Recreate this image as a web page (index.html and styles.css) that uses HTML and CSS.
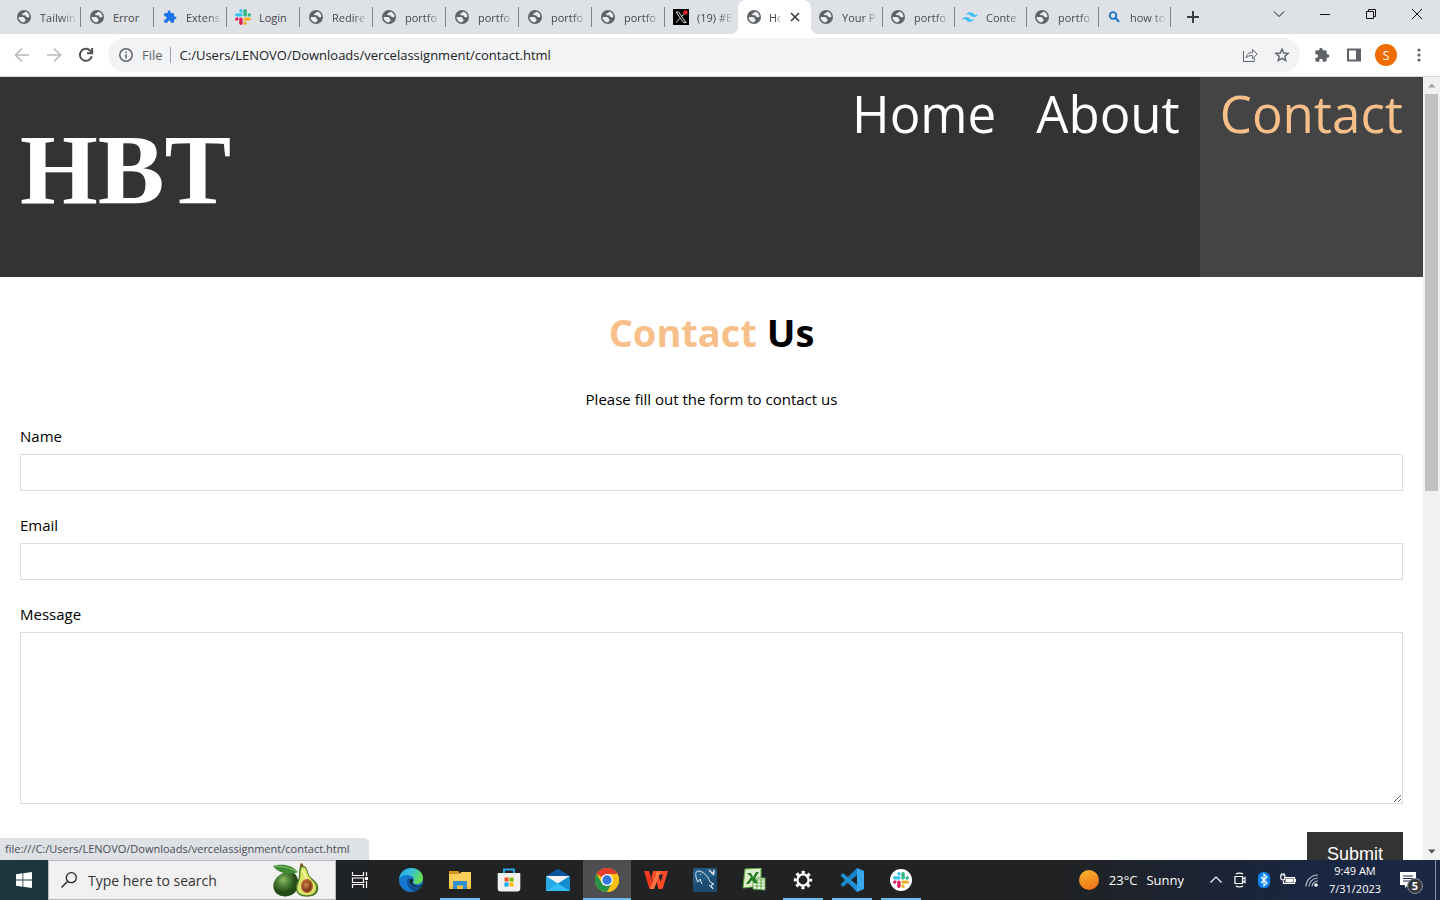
FILE: index.html
```html
<!DOCTYPE html>
<html lang="en">
<head>
<meta charset="utf-8">
<title>Contact</title>
<link rel="stylesheet" href="styles.css">
</head>
<body>
<svg class="defs" aria-hidden="true">
  <symbol id="globe" viewBox="0 0 14 14"><circle cx="7" cy="7" r="7" fill="#5f6368"/><path d="M1.600 7h4.100c1.300 0 2 .8 2 1.700 0 .9 1.200.7 1.200 1.400S7.400 11.100 7.100 12.400C4 12.400 1.600 10 1.600 7zM8.200 1.700c-1.100.5-.9 1.300-2.100 1.600-1.200.2-1.200 1.700-.1 1.900h2c.9 0 .8 1.400 1.600 1.700 1 .3 1.800.8 2.800.1.200-3-1.700-5-4.200-5.300z" fill="#eceef1"/></symbol>
  <symbol id="puzzle" viewBox="0 0 24 24"><path d="M20.500 11H19V7a2 2 0 0 0-2-2h-4V3.500a2.500 2.500 0 0 0-5 0V5H4a2 2 0 0 0-2 2v3.800h1.500a2.700 2.700 0 0 1 0 5.400H2V20a2 2 0 0 0 2 2h3.800v-1.500a2.700 2.700 0 0 1 5.400 0V22H17a2 2 0 0 0 2-2v-4h1.500a2.500 2.500 0 0 0 0-5z" fill="currentColor"/></symbol>
  <symbol id="slack" viewBox="0 0 122 122"><g><path fill="#e01e5a" d="M26 77a13 13 0 1 1-13-13h13zm6 0a13 13 0 0 1 26 0v32a13 13 0 0 1-26 0z"/><path fill="#36c5f0" d="M45 26a13 13 0 1 1 13-13v13zm0 6a13 13 0 0 1 0 26H13a13 13 0 0 1 0-26z"/><path fill="#2eb67d" d="M96 45a13 13 0 1 1 13 13H96zm-6 0a13 13 0 0 1-26 0V13a13 13 0 0 1 26 0z"/><path fill="#ecb22e" d="M77 96a13 13 0 1 1-13 13V96zm0-6a13 13 0 0 1 0-26h32a13 13 0 0 1 0 26z"/></g></symbol>
</svg>

<div class="tabstrip">
  <div class="tabs">
    <button class="tab"><svg class="fav"><use href="#globe"/></svg><span>Tailwin</span></button>
    <button class="tab"><svg class="fav"><use href="#globe"/></svg><span class="whole">Error</span></button>
    <button class="tab"><svg class="fav blue"><use href="#puzzle"/></svg><span>Extens</span></button>
    <button class="tab"><svg class="fav wide"><use href="#slack"/></svg><span class="whole">Login</span></button>
    <button class="tab"><svg class="fav"><use href="#globe"/></svg><span>Redire</span></button>
    <button class="tab"><svg class="fav"><use href="#globe"/></svg><span>portfo</span></button>
    <button class="tab"><svg class="fav"><use href="#globe"/></svg><span>portfo</span></button>
    <button class="tab"><svg class="fav"><use href="#globe"/></svg><span>portfo</span></button>
    <button class="tab"><svg class="fav"><use href="#globe"/></svg><span>portfo</span></button>
    <button class="tab last"><svg class="fav wide" viewBox="0 0 16 16"><path d="M0 0h16v16H0z"/><path d="M3 3h2.500l7.500 10.500h-2.500zM12.500 3 8.700 7.400M7 9.200 3.200 13.500" fill="none" stroke="#ddd" stroke-width="1"/><circle cx="12.500" cy="3.500" r="2.200" fill="#f4212e"/></svg><span>(19) #E</span></button>
    <button class="tab active"><svg class="fav"><use href="#globe"/></svg><span>Ho</span><svg class="close" viewBox="0 0 10 10"><path d="M1 1l8 8M9 1 1 9" stroke="#3c4043" stroke-width="1.700"/></svg></button>
    <button class="tab narrow"><svg class="fav"><use href="#globe"/></svg><span>Your P</span></button>
    <button class="tab narrow"><svg class="fav"><use href="#globe"/></svg><span>portfo</span></button>
    <button class="tab narrow"><svg class="fav wide" viewBox="0 0 24 24"><path fill="#38bdf8" d="M12 4.800c-3.200 0-5.200 1.600-6 4.800 1.200-1.600 2.600-2.200 4.200-1.800.9.200 1.600.9 2.300 1.700 1.200 1.200 2.600 2.500 5.500 2.500 3.200 0 5.200-1.600 6-4.800-1.200 1.600-2.600 2.200-4.200 1.800-.9-.2-1.600-.9-2.300-1.700-1.200-1.200-2.600-2.500-5.500-2.500zM6 12c-3.200 0-5.200 1.600-6 4.800 1.200-1.600 2.600-2.200 4.200-1.800.9.200 1.600.9 2.300 1.700C7.700 17.900 9.100 19.200 12 19.200c3.200 0 5.200-1.600 6-4.800-1.200 1.600-2.600 2.200-4.200 1.800-.9-.2-1.600-.9-2.300-1.700C10.300 13.300 8.900 12 6 12z"/></svg><span>Conte</span></button>
    <button class="tab narrow"><svg class="fav"><use href="#globe"/></svg><span>portfo</span></button>
    <button class="tab narrow"><svg class="fav" viewBox="0 0 14 14"><circle cx="6" cy="5.500" r="3.300" fill="none" stroke="#1a73c8" stroke-width="1.800"/><path d="m8.500 8 3.500 3.700" stroke="#1a73c8" stroke-width="2"/></svg><span>how to</span></button>
  </div>
  <button class="newtab" aria-label="New tab"><svg viewBox="0 0 12 12"><path d="M6 0v12M0 6h12" stroke="#3c4043" stroke-width="2"/></svg></button>
  <div class="winbtns">
    <button aria-label="Search tabs"><svg viewBox="0 0 12 12"><path d="m1 3.500 5 5 5-5"/></svg></button>
    <button aria-label="Minimize"><svg viewBox="0 0 12 12"><path d="M1 6.500h10"/></svg></button>
    <button aria-label="Restore"><svg viewBox="0 0 12 12"><path d="M1.500 3.500h7v7h-7zM3.500 3.500v-2h7v7h-2"/></svg></button>
    <button aria-label="Close"><svg viewBox="0 0 12 12"><path d="m1 1 10 10M11 1 1 11"/></svg></button>
  </div>
</div>

<div class="toolbar">
  <button class="navbtn dim" aria-label="Back"><svg viewBox="0 0 16 16"><path d="M15 8H2M8 1.500 1.500 8 8 14.500"/></svg></button>
  <button class="navbtn dim" aria-label="Forward"><svg viewBox="0 0 16 16"><path d="M1 8h13M8 1.500 14.500 8 8 14.500"/></svg></button>
  <button class="navbtn" aria-label="Reload"><svg viewBox="0 0 16 16"><path d="M13.800 9.200A6 6 0 1 1 12.300 3.700L14 5.500M14.200 1v5.300H9"/></svg></button>
  <div class="omnibox">
    <svg class="info" viewBox="0 0 14 14"><circle cx="7" cy="7" r="6.200" fill="none" stroke="#5f6368" stroke-width="1.500"/><path d="M7 6.200V10.500M7 3.400V5" stroke="#5f6368" stroke-width="1.600"/></svg>
    <span class="scheme">File</span>
    <input class="url" aria-label="Address" value="C:/Users/LENOVO/Downloads/vercelassignment/contact.html">
    <button aria-label="Share"><svg viewBox="0 0 16 16"><path d="M1.500 4v10.500h10.800V11M4 11c.5-4 3-5.500 6.500-5.500V2.500l4.700 4.500-4.700 4.500V8.500C7.500 8.500 5.500 9 4 11z"/></svg></button>
    <button aria-label="Bookmark"><svg viewBox="0 0 16 16"><path d="m8 2 1.700 4 4.500.4-3.400 2.900 1 4.300L8 11.300l-3.800 2.300 1-4.300-3.400-2.900 4.500-.4z" stroke-width="1.400"/></svg></button>
  </div>
  <div class="actions">
    <button aria-label="Extensions"><svg viewBox="0 0 16 16"><use href="#puzzle"/></svg></button>
    <button aria-label="Side panel"><svg viewBox="0 0 16 16"><path d="M1 1.500h14v13H1z" fill="#5f6368"/><path d="M3 3.500h7v9H3z" fill="#fff"/></svg></button>
    <button class="avatar">S</button>
    <button aria-label="Menu"><svg viewBox="0 0 16 16"><g fill="#5f6368"><circle cx="8" cy="3" r="1.600"/><circle cx="8" cy="8" r="1.600"/><circle cx="8" cy="13" r="1.600"/></g></svg></button>
  </div>
</div>

<div class="viewport">
  <div class="page">
    <header class="site-header">
      <h1>HBT</h1>
      <nav><a href="#">Home</a><a href="#">About</a><a href="#" class="current">Contact</a></nav>
    </header>
    <main>
      <h2><span>Contact</span> Us</h2>
      <p>Please fill out the form to contact us</p>
      <form>
        <label for="name">Name</label>
        <input id="name" type="text">
        <label for="email">Email</label>
        <input id="email" type="email">
        <label for="message">Message</label>
        <textarea id="message"></textarea>
        <button type="button" class="submit">Submit</button>
      </form>
    </main>
  </div>
  <div class="scrollbar">
    <svg viewBox="0 0 17 17"><path d="M5 10.500h7.500L8.700 6.500z" fill="#a3a3a3"/></svg>
    <div class="track"><div class="thumb"></div></div>
    <svg viewBox="0 0 17 17"><path d="M5 6.500h7.500l-3.800 4z" fill="#505050"/></svg>
  </div>
  <div class="status">file:///C:/Users/LENOVO/Downloads/vercelassignment/contact.html</div>
</div>

<div class="taskbar">
  <button class="start" aria-label="Start"><svg viewBox="0 0 16 16"><path fill="#fff" d="M0 2.300 6.500 1.300v6.300H0zM7.300 1.200 16 0v7.600H7.300zM0 8.400h6.500v6.300L0 13.700zM7.300 8.400H16V16l-8.700-1.200z"/></svg></button>
  <div class="search">
    <svg class="mag" viewBox="0 0 16 16"><circle cx="10.300" cy="5.700" r="5" fill="none" stroke="#222" stroke-width="1.300"/><path d="M6.700 9.300.5 15.500" stroke="#222" stroke-width="1.300"/></svg>
    <input aria-label="Search" placeholder="Type here to search">
    <svg class="avocado" viewBox="0 0 46 34">
      <defs>
        <radialGradient id="av" cx=".4" cy=".35"><stop offset="0" stop-color="#8eb864"/><stop offset=".5" stop-color="#4b8035"/><stop offset="1" stop-color="#234a17"/></radialGradient>
        <radialGradient id="pit" cx=".4" cy=".35"><stop offset="0" stop-color="#d78a55"/><stop offset="1" stop-color="#7d3b16"/></radialGradient>
      </defs>
      <path d="M12 9c5-2 10 0 12 5 2 5 2 9-1 14-3 5-11 7-17 4-6-3-7-10-4-15 2-4 6-6 10-8z" fill="url(#av)"/>
      <path d="M27 2l1-2 2 1v4h-3z" fill="#925018"/>
      <path d="M28 3c4-1 6 2 7 6 1 5 3 5 7 9 6 6 3 14-3 15-7 2-16 0-16-7-1-6 3-8 3-14 0-4 0-8 2-9z" fill="#4e7923"/>
      <path d="M29 4.500c3-1 4.500 2 5.300 5.500 1 4 3 5 6 8.500 5 5 3 12-3 13.300-6 1.200-13-.3-13-6.300 0-5 3-8 3-13 0-4 .2-7 1.700-8z" fill="#dce36b"/>
      <path d="M29 8c2 0 3 3 3.500 6l5 7" fill="none" stroke="#f1f2a0" stroke-width="2"/>
      <ellipse cx="34" cy="23" rx="6" ry="7" fill="#b45f2a"/><ellipse cx="34" cy="23.500" rx="4.600" ry="5.300" fill="url(#pit)"/>
      <path d="M0 3c8-3 20-1 25 6-9 4-20 1-25-6z" fill="#3f8a38"/><path d="M0 3c9 0 17 2 25 6" fill="none" stroke="#91c46c"/>
    </svg>
  </div>
  <div class="apps">
    <button class="taskview" aria-label="Task view"><svg viewBox="0 0 24 24"><path d="M4.500 4v3.500h11V4M4.500 20v-3.500h11V20M4.500 10h11v4.500h-11zM18.500 4v4M18.500 13v7" fill="none" stroke="#fff" stroke-width="1.200"/><path d="M17 9h3v3h-3z" fill="#fff"/></svg></button>
    <button aria-label="Edge"><svg viewBox="0 0 24 24"><defs><linearGradient id="e1" x2="1" y2=".4"><stop stop-color="#22a5e0"/><stop offset=".5" stop-color="#35c1df"/><stop offset="1" stop-color="#65dd55"/></linearGradient></defs><circle cx="12" cy="12" r="12" fill="#1778cf"/><path d="M.2 11C1 4.500 6 0 12 0c7 0 12 4.500 12 10 0 4-3 6-6.500 6-3 0-4-1.200-3-2.500 1.200-2 .2-5-3.500-6C6.500 6.300 2 7.500.2 11z" fill="url(#e1)"/><path d="M11 11.500c1-1.500 3-.9 3 1-1.500 2-.2 4.500 3 5 2.200.4 4 .1 6-1L22.500 18c-6 2-12.500 0-11.500-6.500z" fill="#1f2224"/><path d="M9.500 9.500C6.500 13 8 22 16 23.300 19 22.300 21.500 20 22.500 18c-6.700 2.500-12.500-1-11.500-6.500z" fill="#124f93"/></svg></button>
    <button class="open" aria-label="File Explorer"><svg viewBox="0 0 24 24"><path d="M1 3h9l2 2.500H1z" fill="#e09b10"/><path d="M1 5.500h11l1.500-1.500H23v17H1z" fill="#fccf5b"/><path d="M1 18h22v3H1z" fill="#f8bd3b"/><path d="M5 13h14v8h-4v-3.500H9V21H5z" fill="#328fd2"/></svg></button>
    <button aria-label="Store"><svg viewBox="0 0 24 24"><path d="M7 5V1.500h10V5" fill="none" stroke="#27a6e8" stroke-width="2"/><path d="M.7 5h22.600v15.500a3 3 0 0 1-3 3H3.700a3 3 0 0 1-3-3z" fill="#f2f2f2"/><path d="M7.500 9.500h4v4h-4z" fill="#f25022"/><path d="M12.500 9.500h4v4h-4z" fill="#7fba00"/><path d="M7.500 14.500h4v4h-4z" fill="#00a4ef"/><path d="M12.500 14.500h4v4h-4z" fill="#ffb900"/></svg></button>
    <button aria-label="Mail"><svg viewBox="0 0 24 24"><path d="M0 8 12 .8 24 8v3H0z" fill="#0b539c"/><path d="M1 8h22v8H1z" fill="#f4f4f4"/><path d="M0 8l12 7.500L24 8v15H0z" fill="#27a9e8"/><path d="M24 8v15L12 15.500z" fill="#168bd0"/><path d="m0 23 12-7.500L24 23z" fill="#35bdf5"/></svg></button>
    <button class="open focused" aria-label="Chrome"><svg viewBox="0 0 24 24"><circle cx="12" cy="12" r="12" fill="#fbc116"/><path d="M12 12 1.600 6A12 12 0 0 1 22.400 6H12z" fill="#e33b2e"/><path d="M1.600 6A12 12 0 0 0 12 24l5.200-9L12 18 6.800 15z" fill="#269447"/><path d="M12 6h10.400A12 12 0 0 1 12 24l5.200-9z" fill="#fbc116"/><circle cx="12" cy="12" r="6" fill="#fff"/><circle cx="12" cy="12" r="4.700" fill="#3478df"/></svg></button>
    <button aria-label="WPS"><svg viewBox="0 0 24 24"><path d="M0 3h5l3.500 11L11 7l2 6-4 8H5.500z" fill="#f13a20"/><path d="M9 3h15l-5.500 18h-4L11.500 10l3-3 2 7L19 6.500h-7.500L9 14 7.500 9z" fill="#ff4927"/><path d="M13 3h4l-7 18H6z" fill="#ff7643"/></svg></button>
    <button aria-label="MySQL Workbench"><svg viewBox="0 0 24 24"><rect width="24" height="24" rx="2" fill="#225b83"/><path d="M0 17 24 8v14l-2 2H2l-2-2z" fill="#1b4b71"/><path d="M5 14C2 9 2 3 5 3c5 0 10 5 12 11l4 2-3 1 2 4-4-4M5 14l2-3 2 5M7 6l1 1" fill="none" stroke="#dde8ef" stroke-width="1"/><path d="m16 2 5 5M21 2v3h-3" fill="none" stroke="#ddd" stroke-width="1.500"/></svg></button>
    <button aria-label="Excel"><svg viewBox="0 0 24 24"><path d="M3 1 19 0v18L1 20z" fill="#dceecb" stroke="#5da53c"/><path d="M11 10h12v12l-12-1z" fill="#f4faef" stroke="#62a34c"/><path d="M12 12h10M12 15h10M12 18h10M15 11v10M19 11v10" stroke="#70b14e" stroke-width="1.200"/><path d="m5 5 4 0 2 4 3-5h3l-4 6 3 5h-4l-2-3-3 4H4l5-7z" fill="#257b23"/></svg></button>
    <button class="open" aria-label="Settings"><svg viewBox="0 0 24 24"><circle cx="12" cy="12" r="5.600" fill="none" stroke="#fff" stroke-width="2.400"/><circle cx="12" cy="12" r="7.700" fill="none" stroke="#fff" stroke-width="3" stroke-dasharray="3 3.048" stroke-dashoffset="1.500"/></svg></button>
    <button class="open" aria-label="VS Code"><svg viewBox="0 0 24 24"><path d="m17 0 7 3v18l-7 3z" fill="#35a8ed"/><path d="M17 0v7L3 19l-2.500-2.500z" fill="#1685cb"/><path d="m3 5-2.500 2.500L17 24v-7z" fill="#218fd5"/></svg></button>
    <button class="open" aria-label="Slack"><svg viewBox="0 0 24 24"><circle cx="12" cy="12" r="11" fill="#fff"/><use href="#slack" x="4" y="4" width="16" height="16"/></svg></button>
  </div>
  <div class="tray">
    <button class="weather"><i class="sun"></i><span>23°C</span><span>Sunny</span></button>
    <button class="ti" aria-label="Hidden icons"><svg viewBox="0 0 16 16"><path d="m2.500 10.500 5.500-5.500 5.500 5.500"/></svg></button>
    <button class="ti" aria-label="Meet now"><svg viewBox="0 0 16 16"><path d="M3 4.500h7.500v7H3zM10.500 7 13 5.500v5L10.500 9M4 2c1.500-1.300 5.500-1.300 7 0M4 14c1.500 1.300 5.500 1.300 7 0"/></svg></button>
    <button class="ti" aria-label="Bluetooth"><svg viewBox="0 0 16 16"><rect x="2" width="12" height="16" rx="5.500" fill="#0a84f4" stroke="none"/><path d="m5 5 6 6-3 2.700V2.300L11 5l-6 6"/></svg></button>
    <button class="ti" aria-label="Battery"><svg viewBox="0 0 16 16"><path d="M5 5.500h9.500v6H3.500V9M.8 3h4v3a2 2 0 0 1-4 0zM1.800 1v2M4 1v2"/><path d="M6 7h7v3H6z" fill="#fff"/><path d="M15.500 7v3"/></svg></button>
    <button class="ti" aria-label="Network"><svg viewBox="0 0 16 16"><g stroke="#bbc2ce"><path d="M2 14.500C2 8 7.500 3 14 3M5 14.500C5 10 9 6 14 6M8 14.500c0-3 3-5.500 6-5.500"/></g><circle cx="12" cy="13" r="1.800" fill="#fff" stroke="none"/></svg></button>
    <div class="clock"><span>9:49 AM</span><span>7/31/2023</span></div>
    <button class="notice" aria-label="Notifications"><svg viewBox="0 0 16 16"><path d="M0 0h16v13H8l-3 3v-3H0z" fill="#fff"/><path d="M3 4h10M3 6.500h10M3 9h7" stroke="#1a2742"/></svg><b>5</b></button>
  </div>
</div>
</body>
</html>
```
FILE: styles.css
```css
* { box-sizing: border-box; }
html, body { height: 100%; }
body {
  margin: 0;
  display: flex;
  flex-direction: column;
  overflow: hidden;
  background: #fff;
  color: #000;
  font-family: "Open Sans", sans-serif;
}
button { border: 0; padding: 0; background: none; font: inherit; color: inherit; }
svg { display: block; flex: none; }
.defs { position: absolute; width: 0; height: 0; }

/* Tab strip */
.tabstrip { display: flex; flex: none; height: 34px; background: #dee1e6; color: #45494d; font-size: 11px; }
.tabs { display: flex; flex: 0 1 1171px; min-width: 0; padding-left: 8px; }
.tab { position: relative; display: flex; flex: 0 1 73px; align-items: center; gap: 9px; min-width: 0; padding: 0 2px 0 9px; text-align: left; }
.tab.narrow { flex-basis: 72px; padding-left: 8px; }
.tab::after { content: ""; position: absolute; right: 0; top: 7px; width: 1px; height: 20px; background: #808489; }
.tab span { flex: 1; min-width: 0; overflow: hidden; white-space: nowrap; -webkit-mask-image: linear-gradient(90deg, #000 55%, transparent 95%); mask-image: linear-gradient(90deg, #000 55%, transparent 95%); }
.tab .whole { -webkit-mask-image: none; mask-image: none; }
.fav { width: 14px; height: 14px; }
.fav.blue { color: #1a73e8; }
.fav.wide { width: 16px; height: 16px; margin: 0 -1px; }
.tab.last::after { display: none; }
.tab.active { background: #fff; border-radius: 8px 8px 0 0; padding-right: 11px; gap: 8px; }
.tab.active::before, .tab.active::after { content: ""; position: absolute; top: auto; bottom: 0; width: 8px; height: 8px; }
.tab.active::before { left: -8px; background: radial-gradient(circle at 0 0, transparent 8px, #fff 8px); }
.tab.active::after { right: -8px; background: radial-gradient(circle at 100% 0, transparent 8px, #fff 8px); }
.close { width: 10px; height: 10px; }
.newtab { display: grid; place-items: center; width: 44px; }
.newtab svg { width: 12px; height: 12px; }
.winbtns { display: flex; height: 28px; margin-left: auto; }
.winbtns button { display: grid; place-items: center; width: 46px; }
.winbtns svg { width: 12px; height: 12px; fill: none; stroke: #111; stroke-width: 1; }

/* Toolbar */
.toolbar { display: flex; flex: none; align-items: center; height: 43px; padding-left: 6px; border-bottom: 1px solid #d5d7da; }
.navbtn { display: grid; place-items: center; width: 32px; height: 32px; }
.navbtn svg { width: 16px; height: 16px; fill: none; stroke: #505458; stroke-width: 2; }
.navbtn.dim svg { stroke: #b9bbbe; stroke-width: 1.7; }
.omnibox { display: flex; flex: 1; align-items: center; height: 34px; margin-left: 6px; padding: 0 10px 0 11px; border-radius: 17px; background: #f1f3f4; font-size: 13px; }
.info { width: 14px; height: 14px; }
.scheme { margin-left: 9px; padding-right: 7px; border-right: 1px solid #9aa0a6; color: #5f6368; line-height: 16px; }
.url { flex: 1; min-width: 0; padding: 0 9px; border: 0; outline: 0; background: none; color: #202124; font: inherit; }
.omnibox button { display: grid; place-items: center; width: 16px; margin-left: 16px; }
.omnibox svg:not(.info) { width: 16px; height: 16px; fill: none; stroke: #5f6368; stroke-width: 1; }
.actions { display: flex; align-items: center; gap: 11px; padding: 0 11px; }
.actions button { display: grid; place-items: center; width: 21px; height: 22px; }
.actions svg { width: 16px; height: 16px; color: #5f6368; }
.actions .avatar { width: 22px; border-radius: 50%; background: #ee6c00; color: #fff; font-size: 12px; }

/* Browser viewport */
.viewport { position: relative; display: flex; flex: 1; min-height: 0; overflow: hidden; }
.page { flex: 1; min-width: 0; overflow: hidden; }
.site-header { display: flex; justify-content: space-between; min-height: 200px; background: #333; color: #fff; }
.site-header h1 { margin: 35px 20px; font: bold 100px/115px "Liberation Serif", serif; }
nav { display: flex; font-size: 51px; line-height: 72px; }
nav a { padding: 0 20px; color: #fff; text-decoration: none; }
nav a.current { background: #444; color: #f7c08a; }
main { padding: 31px 20px; font-size: 15px; line-height: 22px; }
h2 { margin: 0; font-size: 38px; line-height: 48px; text-align: center; }
h2 span { color: #f7c08a; }
main p { margin: 32px 0 15px; text-align: center; }
form { display: flex; flex-direction: column; }
label { margin-bottom: 7px; }
form input { height: 37px; margin-bottom: 23px; padding: 8px; border: 1px solid #ddd; }
form textarea { height: 172px; margin-bottom: 28px; padding: 8px; border: 1px solid #ddd; }
.submit { align-self: flex-end; padding: 12px 20px; background: #333; color: #fff; font: 18px/21px "Liberation Sans", sans-serif; }
.scrollbar { display: flex; flex-direction: column; width: 17px; background: #f1f1f1; }
.scrollbar svg { width: 17px; height: 17px; }
.track { flex: 1; padding: 0 2px; }
.thumb { height: 53%; background: #c1c1c1; }
.status { position: absolute; left: 0; bottom: 0; padding: 0 19px 0 5px; border-radius: 0 5px 0 0; background: #dee1e6; color: #4a4d51; font-size: 11px; line-height: 22px; }

/* Taskbar */
.taskbar { display: flex; flex: none; height: 40px; background: linear-gradient(90deg, #1d3740 0, #1f2a2e 12%, #202224 26%, #202224 74%, #1a2640 90%, #1a2845); color: #fff; }
.start { display: grid; place-items: center; width: 48px; }
.start svg { width: 16px; height: 16px; }
.search { display: flex; align-items: center; width: 288px; padding: 0 16px 0 12px; border: 1px solid #bbb; background: #f1f1f1; }
.mag { width: 16px; height: 16px; }
.search input { flex: 1; min-width: 0; padding: 0 11px; border: 0; outline: 0; background: none; font: 14px "Open Sans", sans-serif; }
.search input::placeholder { color: #333; opacity: 1; }
.avocado { width: 46px; height: 34px; }
.apps { display: flex; gap: 1px; }
.apps button { display: grid; place-items: center; position: relative; width: 48px; }
.apps .taskview { margin-right: 2px; }
.apps svg { width: 24px; height: 24px; }
.apps .open::after { content: ""; position: absolute; left: 4px; right: 4px; bottom: 0; height: 2px; background: #76b9ed; }
.apps .focused { background: #4d4f51; }
.apps .focused::after { left: 0; right: 0; }
.tray { display: flex; align-items: center; margin-left: auto; margin-right: 4px; padding-right: 19px; border-right: 1px solid #8b93a1; font-size: 13px; }
.weather { display: flex; align-items: center; gap: 9px; margin-right: 20px; }
.sun { width: 20px; height: 20px; margin-right: 1px; border-radius: 50%; background: linear-gradient(160deg, #f8b732, #f16a13); }
.ti { display: grid; place-items: center; width: 24px; }
.ti svg { width: 16px; height: 16px; fill: none; stroke: #fff; stroke-width: 1.2; }
.clock { display: flex; flex-direction: column; width: 62px; text-align: center; font-size: 11px; line-height: 18px; }
.notice { position: relative; margin-left: 14px; }
.notice svg { width: 16px; height: 16px; }
.notice b { position: absolute; left: 7px; top: 6px; width: 16px; border: 1px solid #8b8f96; border-radius: 50%; background: #34373d; font-size: 11px; line-height: 14px; }
```
